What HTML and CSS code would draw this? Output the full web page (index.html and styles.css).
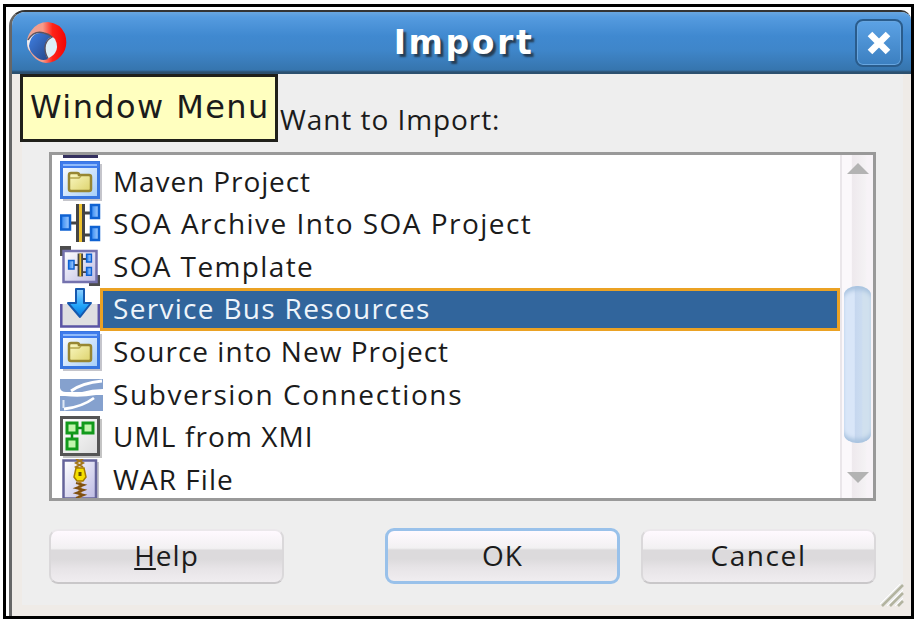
FILE: index.html
```
<!DOCTYPE html>
<html lang="en">
<head>
<meta charset="utf-8">
<title>Import</title>
<link rel="stylesheet" href="styles.css">
</head>
<body>
<main class="frame">
<section class="window">
  <header class="titlebar">
    <svg class="logo" viewBox="0 0 42 43">
      <defs>
        <linearGradient id="red" x1="0" y1="0" x2="1" y2="0"><stop offset="0" stop-color="#e9a699"/><stop offset=".4" stop-color="#f79a88"/><stop offset=".65" stop-color="#ff2418"/><stop offset="1" stop-color="#f20505"/></linearGradient>
        <linearGradient id="orb" x1="0" y1="0" x2="1" y2="1"><stop offset="0" stop-color="#3f80e4"/><stop offset="1" stop-color="#254585"/></linearGradient>
      </defs>
      <path d="M2 27Q-1 17 5 9Q11 0 22 0Q34 1 39 12Q43 25 35 34Q29 41 20 41Q12 40 7 34Z" fill="url(#red)"/>
      <path d="M1 19Q5 11 14 10L9 15Q5 20 4 29Q1 25 1 19Z" fill="#eceef2"/>
      <path d="M20 37Q16 24 21 17Q25 12 29 17Q33 25 29 31Q26 35 20 37Z" fill="#def0f8"/>
      <path d="M3 24Q5 10 16 11Q23 12 25 15Q19 18 19 26Q19 33 22 37Q15 40 9 34Q4 30 3 24Z" fill="url(#orb)"/>
      <path d="M2 18Q8 8 18 11Q23 12 26 15Q19 19 19 26Q19 32 22 36" fill="none" stroke="#5b5361" stroke-width="1.400"/>
    </svg>
    <h1 class="title">Import</h1>
    <button class="close" aria-label="Close"><svg viewBox="0 0 24 24"><path d="M3 3L21 21M21 3L3 21" stroke="#fff" stroke-width="6.5"/></svg></button>
  </header>
  <div class="content">
    <p class="prompt">Want to Import:</p>
    <div class="list">
      <ul class="rows">
        <li class="row peek"><svg class="icon" viewBox="0 0 43 6"><path d="M3 0h35v3H3z" fill="#35315f"/></svg></li>
        <li class="row"><svg class="icon" viewBox="0 0 43 42"><use href="#folder"/></svg><span class="label maven">Maven Project</span></li>
        <li class="row"><svg class="icon" viewBox="0 0 43 42"><use href="#soa"/></svg><span class="label archive">SOA Archive Into SOA Project</span></li>
        <li class="row"><svg class="icon" viewBox="0 0 43 42">
          <path d="M0 0h11v4H4v6H0zM40 40H29v-4h7v-7h4z" fill="#4d4d4d"/>
          <path d="M3.500 5h33v31h-33z" fill="url(#lilac)" stroke="#7472ae" stroke-width="2.500"/>
          <use href="#soa" transform="translate(8 7) scale(.6)"/>
        </svg><span class="label template">SOA Template</span></li>
        <li class="row selected"><svg class="icon" viewBox="0 0 43 42">
          <path d="M0 16h40v23H0z" fill="#dfdfe1"/>
          <path d="M1.300 16v22.500h37.500V16" fill="none" stroke="#5b55a5" stroke-width="2.500"/>
          <path d="M16 1h8v14h7L20 29 8 15h8z" fill="url(#arrow)" stroke="#1558ae" stroke-width="2" stroke-linejoin="round"/>
        </svg><span class="label bus">Service Bus Resources</span></li>
        <li class="row"><svg class="icon" viewBox="0 0 43 42"><use href="#folder"/></svg><span class="label source">Source into New Project</span></li>
        <li class="row"><svg class="icon" viewBox="0 0 43 42">
          <path d="M0 5h43v10Q32 15 22 18H6Q1 18 0 14zM0 22h5Q20 24 36 21h7v16H0z" fill="#85a1ce"/>
          <path d="M11 17Q22 9 42 7M4 35Q22 33 34 24" fill="none" stroke="#fff" stroke-width="2.800"/>
          <path d="M3.500 26v8" stroke="#dfe8f5" stroke-width="2"/>
        </svg><span class="label subversion">Subversion Connections</span></li>
        <li class="row"><svg class="icon" viewBox="0 0 43 42">
          <path d="M3 3h39v39H3z" fill="#c4c4c4"/>
          <path d="M1.500 1.500h37v37h-37z" fill="url(#paper)" stroke="#555" stroke-width="3"/>
          <path d="M18 12h5M12 18v4" stroke="#0b8a17" stroke-width="2.500"/>
          <g fill="#c2f5ae" stroke="#129a1b" stroke-width="3"><path d="M7 7h10v10H7zM23 7h10v10H23zM7 23h10v10H7z"/></g>
        </svg><span class="label uml">UML from XMI</span></li>
        <li class="row"><svg class="icon" viewBox="0 0 43 42">
          <path d="M6 3h33v39H6z" fill="#c4c4cc"/>
          <path d="M3.500 1.500h32.500v38h-32.500z" fill="url(#lilac)" stroke="#65649b" stroke-width="2.500"/>
          <path d="M16 0l7 4-7 4 7 4M23 0l-7 4 7 4" fill="none" stroke="#a4761a" stroke-width="2"/>
          <path d="M16 9h8l2 9-3 4h-6l-3-4z" fill="#f5df00" stroke="#a67b00" stroke-width="1.500"/>
          <path d="M20 13v4" stroke="#655000" stroke-width="3"/>
          <path d="M20 22v18" stroke="#c08b28" stroke-width="3"/><path d="M16 24l8 2-8 3 8 2-8 3 8 2-8 3" fill="none" stroke="#805010" stroke-width="2"/>
        </svg><span class="label war">WAR File</span></li>
      </ul>
      <div class="scrollbar">
        <svg class="arrow" viewBox="0 0 22 11"><path d="M0 11L11 0l11 11z" fill="#b3b3b3"/></svg>
        <div class="thumb"></div>
        <svg class="arrow" viewBox="0 0 22 11"><path d="M0 0h22L11 11z" fill="#b3b3b3"/></svg>
      </div>
    </div>
    <footer class="actions">
      <button class="btn help"><u>H</u>elp</button>
      <button class="btn ok">OK</button>
      <button class="btn cancel">Cancel</button>
    </footer>
  </div>
  <svg class="grip" viewBox="0 0 24 24"><path d="M2 22L23 1M10 22L23 9M18 22l5-5" stroke="#b3b4a0" stroke-width="2.600"/><path d="M0 20L21-1M7 22L23 6M15 22l8-8" stroke="#fff" stroke-width="1"/></svg>
  <div class="tooltip" role="tooltip">Window Menu</div>
</section>
</main>
<svg class="defs">
  <defs>
    <linearGradient id="sky" x1="0" y1="0" x2="1" y2="1"><stop offset="0" stop-color="#fff"/><stop offset="1" stop-color="#a4cdf8"/></linearGradient>
    <linearGradient id="gold" x1="0" y1="0" x2="1" y2="1"><stop offset="0" stop-color="#fbf9c4"/><stop offset="1" stop-color="#ddd36d"/></linearGradient>
    <linearGradient id="lilac" x1="0" y1="0" x2="1" y2="1"><stop offset="0" stop-color="#fff"/><stop offset="1" stop-color="#bdbbe4"/></linearGradient>
    <linearGradient id="paper" x1="0" y1="0" x2="1" y2="1"><stop offset="0" stop-color="#fff"/><stop offset="1" stop-color="#ddd"/></linearGradient>
    <linearGradient id="arrow" x1="0" y1="0" x2="0" y2="1"><stop offset="0" stop-color="#8fd0ff"/><stop offset=".6" stop-color="#22a5fa"/><stop offset="1" stop-color="#0877db"/></linearGradient>
    <linearGradient id="node" x1="0" y1="0" x2="1" y2="0"><stop offset="0" stop-color="#2f86f2"/><stop offset="1" stop-color="#a8d0ff"/></linearGradient>
    <g id="folder">
      <path d="M3 3h39v37H3z" fill="#c5c5cb"/>
      <path d="M1.500 1.500h37v35h-37z" fill="url(#sky)" stroke="#3876df" stroke-width="3"/>
      <path d="M1 1h38v6H1z" fill="#3f7cec"/><path d="M3 4h34" stroke="#8ebafa" stroke-width="2"/>
      <path d="M9 14q0-2 2-2h6q2 0 2 2h10q2 0 2 2v12q0 2-2 2H11q-2 0-2-2z" fill="url(#gold)" stroke="#978632" stroke-width="2.500"/>
      <path d="M10 17h9l2-2" fill="none" stroke="#b5a64d" stroke-width="1.500"/>
    </g>
    <g id="soa">
      <path d="M10 20h8M22 10h8M22 32h8" stroke="#444" stroke-width="3"/>
      <path d="M16 1h9v38h-9z" fill="#444"/><path d="M20.500 1v38" stroke="#efc22d" stroke-width="3"/>
      <g fill="url(#node)" stroke="#0f62d2" stroke-width="2.500"><path d="M1 12.500h9v14H1z"/><path d="M31 2h8v13h-8z"/><path d="M31 24h8v13h-8z"/></g>
    </g>
  </defs>
</svg>
</body>
</html>
```
FILE: styles.css
```
* { box-sizing: border-box; }
body { margin: 0; padding: 4px 2px 0 3px; width: 916px; height: 630px; overflow: hidden; background: #fff; font: 28px/40px "Open Sans", "Noto Sans", sans-serif; color: #1b1b1b; }
.defs { position: absolute; width: 0; height: 0; }
.frame { width: 911px; height: 615px; border: 3px solid #000; padding: 3px 0 0 3px; background: #fff; }
.window { position: relative; height: 606px; border: solid #333; border-width: 2px 0 0 3px; border-left-color: #666; border-radius: 16px 10px 0 0; background: #efebe7; overflow: hidden; }
.titlebar { display: flex; align-items: center; height: 62px; padding: 0 8px 0 14px; background: linear-gradient(#69a6df 0, #559bdf 5px, #4089d0 24px, #3f86ca 38px, #3675ae 58px, #2c506f 60px, #2c506f 100%); }
.logo { width: 42px; height: 43px; }
.title { flex: 1; margin: 0; padding-left: 5px; text-align: center; font: bold 33px/60px "DejaVu Sans", sans-serif; letter-spacing: 2.6px; color: #fff; text-shadow: 3px 3px 2px #263d54; }
.close { width: 48px; height: 48px; padding: 0; border: 2px solid #2a5c8c; border-radius: 8px; background: linear-gradient(#5ca2e5, #3b7fc0); box-shadow: inset 0 0 0 1px #67a5df; display: grid; place-items: center; }
.close svg { width: 24px; height: 24px; }
.content { margin: 0 8px 0 10px; height: 531px; padding: 25px 27px 0; background: #eee; }
.prompt { margin: 0 0 11px; padding-left: 231px; height: 42px; white-space: nowrap; letter-spacing: .93px; }
.list { display: flex; width: 827px; height: 349px; border: 3px solid #999; background: #fff; overflow: hidden; }
.rows { flex: 1; margin: 0; padding: 0; list-style: none; }
.row { display: flex; height: 42.67px; padding-left: 8px; }
.peek { height: 5.500px; }
.peek .icon { height: 6px; }
.icon { flex: none; width: 43px; height: 42px; }
.label { flex: 1; margin-left: -3px; padding-left: 13px; white-space: nowrap; }
.selected .label { height: 42.67px; border: 3px solid #eba224; padding-left: 10px; background: #31659c; color: #eef4fa; line-height: 34px; }
.maven { letter-spacing: .9px; }
.archive { letter-spacing: 1.46px; }
.template { letter-spacing: 1.37px; }
.bus { letter-spacing: 1.31px; }
.source { letter-spacing: 1.02px; }
.subversion { letter-spacing: 1.6px; }
.uml { letter-spacing: 1.1px; }
.war { letter-spacing: 1.05px; }
.scrollbar { display: flex; flex-direction: column; align-items: center; width: 33px; padding: 8px 0 15px; border-left: 2px solid #eae6ea; background: linear-gradient(90deg, #fbf8fb 30%, #eee9ed 34%, #f4f2f4 75%, #f7f3f7 80%); }
.arrow { width: 22px; height: 11px; }
.thumb { width: 27px; height: 157px; margin: 112px 0 29px; border-radius: 13px / 9px; background: linear-gradient(90deg, #d9e6f8 38%, #c6d7ef 42%, #cbdcf0 65%, #d0e0ee 70%); box-shadow: inset 0 6px 4px -2px #a9c3df, inset 0 -6px 4px -2px #a9c3df; }
.actions { display: flex; align-items: center; margin-top: 27px; height: 56px; }
.btn { flex: none; width: 235px; height: 55px; padding: 0; border: 2px solid #dad8da; border-top-color: #ebe8eb; border-bottom-color: #c9c7c9; border-radius: 9px; font: inherit; line-height: 46px; letter-spacing: 1px; color: #1b1b1b; background: linear-gradient(#fff9ff 0, #f2f1f2 34%, #dcdadc 38%, #dcdadc 55%, #e7e4e7 73%, #f0edf0 100%); }
.btn { padding-bottom: 3px; }
.ok { height: 56px; margin: 0 21px 0 101px; border: 3px solid #99c1ea; }
.cancel { letter-spacing: 1.6px; }
.grip { position: absolute; right: 7px; bottom: 8px; width: 24px; height: 24px; }
.tooltip { position: absolute; left: 8px; top: 62px; width: 258px; height: 68px; padding-left: 7px; border: 3px solid #20201a; background: #ffffbf; font: 32px/61px "DejaVu Sans", sans-serif; letter-spacing: 1.4px; white-space: nowrap; }
```
